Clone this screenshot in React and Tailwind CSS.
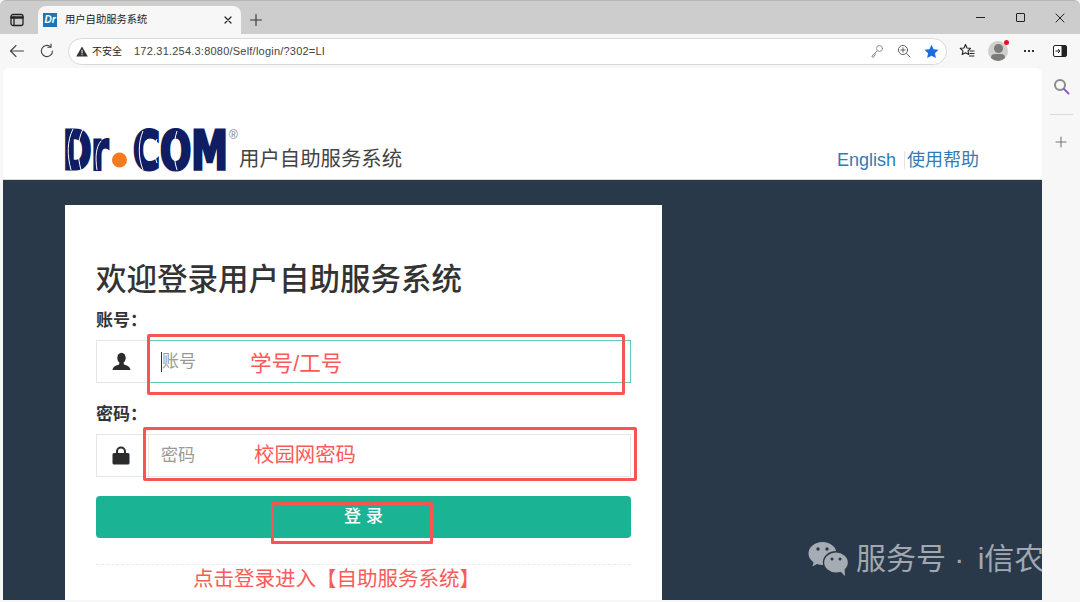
const SANS = '"Liberation Sans", "Noto Sans CJK SC", sans-serif'

function Stroke({ className, children, w = 16, h = 16, box = '0 0 16 16', sw = 1.1, color = '#333' }) {
  return (
    <svg className={className} width={w} height={h} viewBox={box} fill="none" stroke={color} strokeWidth={sw} strokeLinecap="round" strokeLinejoin="round">
      {children}
    </svg>
  )
}

function Logo() {
  return (
    <svg width="175" height="44" viewBox="0 0 175 44" className="shrink-0 overflow-visible">
      <g fontFamily="DejaVu Sans" fontWeight="700" fontSize="40" fill="#101d63" stroke="#101d63" strokeWidth="2.4">
        <text transform="translate(-2,42) scale(0.86,1.32)">Dr</text>
        <text transform="translate(68,42) scale(0.92,1.32)">COM</text>
      </g>
      <path d="M8 2 C2 14 2 28 6 43 M18 2 C12 14 12 28 16 43 M36 14 C31 20 30 30 32 43 M78 4 C73 16 73 30 78 43 M92 12 C89 20 89 28 92 36 M112 4 C108 16 108 30 112 43" stroke="#fff" strokeWidth="1" fill="none" />
      <circle cx="54.5" cy="33" r="7.5" fill="#f47b20" />
      <text x="164" y="12" fontFamily="Liberation Sans" fontSize="12" fill="#7a8090">®</text>
    </svg>
  )
}

function UserIcon() {
  return (
    <svg width="19" height="19" viewBox="0 0 19 19" fill="#2b2b2b">
      <ellipse cx="9.5" cy="6" rx="4.2" ry="5.2" />
      <path d="M7.5 10.5 L11.5 10.5 L12 12.5 C15 13.5 18 14.5 18.5 18 L0.5 18 C1 14.5 4 13.5 7 12.5 Z" />
    </svg>
  )
}

function LockIcon() {
  return (
    <svg width="18" height="19" viewBox="0 0 18 19">
      <path d="M5 8 V5.5 a4 4 0 0 1 8 0 V8" fill="none" stroke="#2b2b2b" strokeWidth="2" />
      <rect x="0.5" y="7" width="17" height="11.5" rx="1.5" fill="#2b2b2b" />
    </svg>
  )
}

function WeChat() {
  return (
    <svg width="41" height="36" viewBox="0 0 41 36">
      <path d="M14.5 1 C6.5 1 0.5 6.2 0.5 12.5 C0.5 16.2 2.6 19.2 5.6 21.4 L4.4 25.4 L9 23 C11 23.6 12.6 23.9 14.5 23.9 C22.5 23.9 28.5 18.7 28.5 12.5 C28.5 6.2 22.5 1 14.5 1 Z" fill="#a6acb4" />
      <ellipse cx="28" cy="21.5" rx="12.5" ry="10.8" fill="#a6acb4" stroke="#293949" strokeWidth="1.4" />
      <path d="M32 30 L37 35 L36.5 27 Z" fill="#a6acb4" />
      <circle cx="10" cy="8" r="1.7" fill="#293949" />
      <circle cx="19" cy="8" r="1.7" fill="#293949" />
      <circle cx="24" cy="18" r="1.5" fill="#293949" />
      <circle cx="32" cy="18" r="1.5" fill="#293949" />
    </svg>
  )
}

function TabStrip() {
  return (
    <div className="h-[34px] shrink-0 flex bg-[#cdcdcd] border-t border-[#b5b5b5] rounded-t-[6px]">
      <div className="w-[38px] flex items-center pl-[9px] pt-[4px]">
        <Stroke sw={1.3} color="#222">
          <rect x="2" y="2.5" width="12" height="11" rx="2" />
          <path d="M2.5 5.5 H13.5" strokeWidth="2.4" />
          <path d="M5 5 V13" />
        </Stroke>
      </div>
      <div className="mt-[5px] w-[203px] bg-[#f7f7f7] rounded-t-[8px] flex items-center pl-[5px] pr-[8px]">
        <div className="w-[14px] h-[14px] bg-[#1f74b8] text-white text-[10px] leading-[14px] font-bold italic text-center">Dr</div>
        <span className="ml-[8px] text-[10.3px] text-[#222]">用户自助服务系统</span>
        <Stroke className="ml-auto" w={10} h={10} box="0 0 10 10" sw={1.2} color="#222">
          <path d="M2 2 L8 8 M8 2 L2 8" />
        </Stroke>
      </div>
      <div className="ml-[8px] mt-[5px] flex items-center">
        <Stroke w={14} h={14} box="0 0 14 14" color="#333">
          <path d="M7 1.5 V12.5 M1.5 7 H12.5" />
        </Stroke>
      </div>
      <div className="ml-auto w-[104px] flex items-center">
        <div className="w-[9px] h-px bg-[#222]" />
        <div className="ml-[31px] w-[9px] h-[9px] border border-[#222] rounded-[1px]" />
        <Stroke className="ml-[30px]" w={10} h={10} box="0 0 10 10" sw={1} color="#222">
          <path d="M1 1 L9 9 M9 1 L1 9" />
        </Stroke>
      </div>
    </div>
  )
}

function Toolbar() {
  return (
    <div className="h-[34px] shrink-0 flex items-center bg-[#f7f7f7]">
      <div className="w-[68px] flex items-center pl-[9px] gap-[14px]">
        <Stroke color="#444">
          <path d="M14.5 8 H1.5 M7 2.5 L1.5 8 L7 13.5" />
        </Stroke>
        <Stroke color="#444">
          <path d="M13.5 8 A5.6 5.6 0 1 1 11.6 3.8" />
          <path d="M12 1 V4.2 H8.8" />
        </Stroke>
      </div>
      <div className="w-[879px] h-[27px] rounded-full bg-white border border-[#d9d9d9] flex items-center pl-[7px]">
        <svg width="12" height="11" viewBox="0 0 12 11" fill="#333">
          <path d="M6 0.5 L11.8 10.5 H0.2 Z" />
          <rect x="5.5" y="3.8" width="1" height="3.6" fill="#fff" />
          <rect x="5.5" y="8.2" width="1" height="1" fill="#fff" />
        </svg>
        <span className="ml-[4px] text-[10px] text-[#222]">不安全</span>
        <span className="ml-[12px] text-[11px] text-[#444] tracking-[0.02em]">172.31.254.3:8080/Self/login/?302=LI</span>
        <div className="ml-auto flex items-center gap-[13px] pr-[7px]">
          <Stroke w={14} h={14} box="0 0 14 14" sw={0.9} color="#888">
            <circle cx="9.5" cy="4.5" r="3" />
            <path d="M7.3 6.7 L2 12 V13 H3.8 L4 11.5 L5.2 11.2 L5.4 9.8" />
          </Stroke>
          <Stroke w={14} h={14} box="0 0 14 14" sw={0.9} color="#555">
            <circle cx="6" cy="6" r="4.6" />
            <path d="M9.5 9.5 L13 13 M6 3.8 V8.2 M3.8 6 H8.2" />
          </Stroke>
          <svg width="15" height="15" viewBox="0 0 24 24" fill="#1b6ce0">
            <path d="M12 1 L15.4 8.2 L23.2 9.2 L17.5 14.6 L19 22.4 L12 18.6 L5 22.4 L6.5 14.6 L0.8 9.2 L8.6 8.2 Z" />
          </svg>
        </div>
      </div>
      <div className="flex-1 flex items-center pl-[12px]">
        <Stroke color="#222">
          <path d="M6.5 1.5 L8 5 L11.5 5.3 L9 7.8 L9.8 11.5 L6.5 9.7 L3.2 11.5 L4 7.8 L1.2 5.3 L5 5 Z" />
          <path d="M11 8 H15 M11 10.5 H15 M10.5 13 H15" />
        </Stroke>
        <div className="relative ml-[13px] w-[20px] h-[20px]">
          <div className="w-full h-full rounded-full bg-[#d0cfcc] overflow-hidden">
            <div className="mx-auto mt-[3px] w-[9px] h-[9px] rounded-full bg-[#7b7b7b]" />
            <div className="mx-auto mt-[1px] w-[14px] h-[8px] rounded-full bg-[#7b7b7b]" />
          </div>
          <div className="absolute right-[-1px] top-[-1px] w-[5px] h-[5px] rounded-full bg-[#e81123]" />
        </div>
        <div className="ml-[16px] flex gap-[2px]">
          <div className="w-[2px] h-[2px] bg-[#333]" />
          <div className="w-[2px] h-[2px] bg-[#333]" />
          <div className="w-[2px] h-[2px] bg-[#333]" />
        </div>
        <svg className="ml-[19px]" width="14" height="12" viewBox="0 0 14 12">
          <rect x="0.5" y="0.5" width="13" height="11" rx="1.5" fill="#fff" stroke="#222" />
          <rect x="8.5" y="0.5" width="5" height="11" rx="1" fill="#222" />
          <path d="M2.5 6 H7 M5 4 L7 6 L5 8" stroke="#222" fill="none" />
        </svg>
      </div>
    </div>
  )
}

function Field({ label, placeholder, icon, focused }) {
  return (
    <>
      <label className="block text-[17px] leading-[26px] font-bold text-[#333]">{label}</label>
      <div className="mt-[6px] flex h-[43px]">
        <div className="w-[52px] shrink-0 flex items-center justify-center pr-[3px] border border-r-0 border-[#e5e6e7]">{icon}</div>
        <div className={`flex-1 flex items-center pl-[12px] border ${focused ? 'border-[#5fcbb4]' : 'border-[#e5e6e7]'}`}>
          {focused && <div className="w-px h-[20px] bg-[#333]" />}
          <span className="text-[17px] text-[#999]">{placeholder}</span>
        </div>
      </div>
    </>
  )
}

export default function App() {
  return (
    <div className="relative w-[1080px] h-[602px] overflow-hidden flex flex-col bg-[#f7f7f7]" style={{ fontFamily: SANS }}>
      <TabStrip />
      <Toolbar />

      <div className="h-[532px] shrink-0 flex pl-[3px]">
        <div className="w-[1039px] flex flex-col rounded-tr-[6px] rounded-tl-[6px] overflow-hidden bg-white">
          <div className="h-[112px] shrink-0 flex items-end pl-[62px] pr-[63px] border-b border-[#d8d8d8]">
            <div className="flex items-end pb-[8px]">
              <Logo />
              <span className="ml-[-1px] text-[20.4px] leading-[24px] text-[#444]">用户自助服务系统</span>
            </div>
            <div className="ml-auto flex items-center pb-[8px] text-[18px] leading-[22px] text-[#337ab7]">
              <span>English</span>
              <span className="ml-[8px] w-px h-[18px] bg-[#e5e5e5]" />
              <span className="ml-[2px]">使用帮助</span>
            </div>
          </div>

          <div className="flex-1 min-h-0 relative bg-[#293949] pl-[62px] pt-[25px]">
            <div className="w-[597px] h-[395px] bg-white px-[31px] pt-[54px]">
              <h1 className="text-[30.5px] leading-[40px] font-medium text-[#333] whitespace-nowrap">欢迎登录用户自助服务系统</h1>
              <div className="mt-[9px]">
                <Field label="账号：" placeholder="账号" icon={<UserIcon />} focused />
              </div>
              <div className="mt-[19px]">
                <Field label="密码：" placeholder="密码" icon={<LockIcon />} />
              </div>
              <button className="mt-[19px] w-full h-[42px] rounded-[4px] bg-[#1ab394] pl-[5px] text-white text-[17px] font-medium tracking-[0.3em]">登录</button>
              <div className="mt-[26px] border-t border-dashed border-[#e7eaec]" />
            </div>
            <div className="absolute left-[805px] top-[359px] flex items-center whitespace-nowrap">
              <WeChat />
              <span className="ml-[7px] text-[30px] leading-[40px] text-[#a2a8b0]">服务号 · <span className="ml-[5px]">i信农</span></span>
            </div>
          </div>
        </div>

        <div className="flex-1 flex flex-col items-center pt-[10px]">
          <Stroke w={17} h={17} box="0 0 17 17" sw={2} color="#8a8a8a">
            <circle cx="7" cy="7" r="5" />
            <path d="M11 11 L15.5 15.5" stroke="#8d5cc8" />
          </Stroke>
          <div className="mt-[19px] w-[23px] h-px bg-[#d8d8d8]" />
          <Stroke className="mt-[21px]" w={12} h={12} box="0 0 12 12" color="#777">
            <path d="M6 1 V11 M1 6 H11" />
          </Stroke>
        </div>
      </div>

      {/* red annotations drawn on top of the screenshot */}
      <div className="absolute left-[147px] top-[334px] w-[478px] h-[61px] border-[3px] border-[#f95454] rounded-[2px]" />
      <div className="absolute left-[143px] top-[427px] w-[494px] h-[54px] border-[3px] border-[#f95454] rounded-[2px]" />
      <div className="absolute left-[271px] top-[502px] w-[162px] h-[42px] border-[3px] border-[#f95454] rounded-[1px]" />
      <span className="absolute left-[250px] top-[350px] text-[21.6px] leading-[28px] text-[#fb5a5a]">学号/工号</span>
      <span className="absolute left-[254px] top-[441px] text-[20.4px] leading-[28px] text-[#fb5a5a]">校园网密码</span>
      <span className="absolute left-[193px] top-[565px] text-[20.5px] leading-[28px] text-[#fb5a5a] whitespace-nowrap">点击登录进入【自助服务系统】</span>
    </div>
  )
}
